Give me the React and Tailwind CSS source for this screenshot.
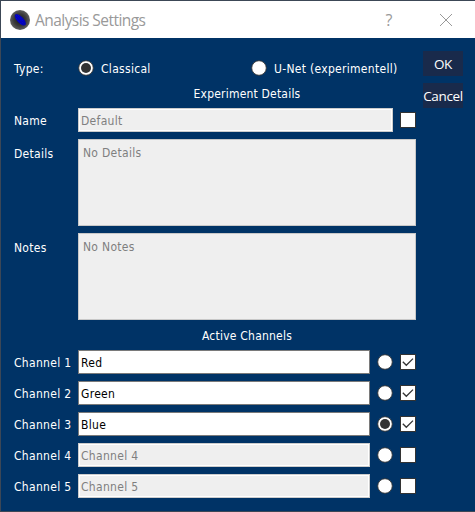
import React from "react";

const channels = [
  { label: "Channel 1", value: "Red", active: true },
  { label: "Channel 2", value: "Green", active: true },
  { label: "Channel 3", value: "Blue", active: true, selected: true },
  { label: "Channel 4", value: "Channel 4" },
  { label: "Channel 5", value: "Channel 5" },
];

function Radio({ checked }) {
  return (
    <svg className="size-4 shrink-0" viewBox="0 0 16 16">
      <circle cx="8" cy="8" r="7.3" fill="#fff" stroke="#333" strokeWidth="0.9" />
      {checked && <circle cx="8" cy="8" r="5" fill="#333" />}
    </svg>
  );
}

function Check({ checked }) {
  return (
    <svg className="size-4 shrink-0" viewBox="0 0 16 16">
      <rect x="0.5" y="0.5" width="15" height="15" fill="#fff" stroke="#333" />
      {checked && <path d="M2.8 7.8 6.3 11.3 13 4.6" fill="none" stroke="#333" strokeWidth="1.3" />}
    </svg>
  );
}

function Field({ value, disabled, className }) {
  return (
    <div
      className={
        "flex h-6 items-center border pt-0.5 pl-0.5 whitespace-nowrap " +
        (disabled
          ? "border-[#ccc] bg-[#efefef] text-[#7f7f7f] shadow-[inset_0_0_0_1px_#fff] "
          : "border-[#7a7a7a] bg-white text-black ") +
        className
      }
    >
      {value}
    </div>
  );
}

function Label({ children }) {
  return <div className="w-16 shrink-0 pt-0.5 whitespace-nowrap">{children}</div>;
}

function NoteBox({ label, text }) {
  return (
    <div className="flex h-[87px]">
      <div className="pt-[5px]"><Label>{label}</Label></div>
      <div className="w-[338px] border border-[#c8c8c8] bg-[#efefef] pt-[5px] pl-1 text-[#7f7f7f]">{text}</div>
    </div>
  );
}

export default function App() {
  return (
    <div className="flex h-[512px] w-[475px] flex-col overflow-hidden border-t border-b border-l border-[#3c4756] bg-[#003366] font-['DejaVu_Sans_Condensed','DejaVu_Sans',sans-serif] text-[12px] leading-4 tracking-[0.3px] text-white [font-stretch:condensed]">
      <header className="flex h-[37px] shrink-0 items-center bg-white pl-[9px] font-['Open_Sans','Noto_Sans',sans-serif] tracking-normal text-[#999] [font-stretch:normal]">
        <svg className="size-5 shrink-0" viewBox="0 0 20 20">
          <defs>
            <radialGradient id="disc">
              <stop offset="0" stopColor="#181818" />
              <stop offset="0.6" stopColor="#3a3a3a" />
              <stop offset="1" stopColor="#606060" />
            </radialGradient>
          </defs>
          <circle cx="10" cy="10" r="10" fill="url(#disc)" />
          <ellipse cx="10.3" cy="9.8" rx="7.4" ry="3.2" fill="#0606b4" transform="rotate(46 10.3 9.8)" />
          <path d="m6 5 8 9M8 5l6 7M6 8l6 7" stroke="#0000ed" strokeWidth="0.8" strokeDasharray="2 1" />
        </svg>
        <div className="ml-[5px] w-[339px] text-[15.5px] leading-5 tracking-[-0.55px] whitespace-nowrap">Analysis Settings</div>
        <div className="w-[30px] text-center text-[16px]">?</div>
        <svg className="ml-[35px] size-3.5" viewBox="0 0 14 14" fill="none" stroke="#999">
          <path d="m1 1 12 12M13 1 1 13" />
        </svg>
      </header>
      <main className="flex gap-[7px] pt-5 pl-[13px]">
        <div className="flex w-[402px] flex-col gap-[7px]">
          <div className="flex h-5 items-center">
            <Label>Type:</Label>
            <div className="flex w-[173px] items-center gap-[7px]"><Radio checked /><span className="pt-0.5">Classical</span></div>
            <div className="flex items-center gap-[7px] whitespace-nowrap"><Radio /><span className="pt-0.5">U-Net (experimentell)</span></div>
          </div>
          <div className="ml-16 h-4 pt-px text-center tracking-[0.2px]">Experiment Details</div>
          <div className="flex items-center">
            <Label>Name</Label>
            <Field value="Default" disabled className="mr-[7px] w-[315px]" />
            <Check />
          </div>
          <NoteBox label="Details" text="No Details" />
          <NoteBox label="Notes" text="No Notes" />
          <div className="ml-16 h-4 pt-px text-center tracking-[0.22px]">Active Channels</div>
          {channels.map((c) => (
            <div key={c.label} className="flex items-center">
              <Label>{c.label}</Label>
              <Field value={c.value} disabled={!c.active} className="mr-[7px] w-[292px]" />
              <Radio checked={c.selected} />
              <div className="ml-[7px] flex"><Check checked={c.active} /></div>
            </div>
          ))}
        </div>
        <div className="-mt-[7px] flex w-10 flex-col gap-[7px] font-['Open_Sans','Noto_Sans',sans-serif] text-[13.5px] tracking-[-0.35px] [font-stretch:normal]">
          <button className="flex h-[25px] items-center justify-center bg-[#192a4b]">OK</button>
          <button className="flex h-[25px] items-center justify-center bg-[#192a4b]">Cancel</button>
        </div>
      </main>
    </div>
  );
}
